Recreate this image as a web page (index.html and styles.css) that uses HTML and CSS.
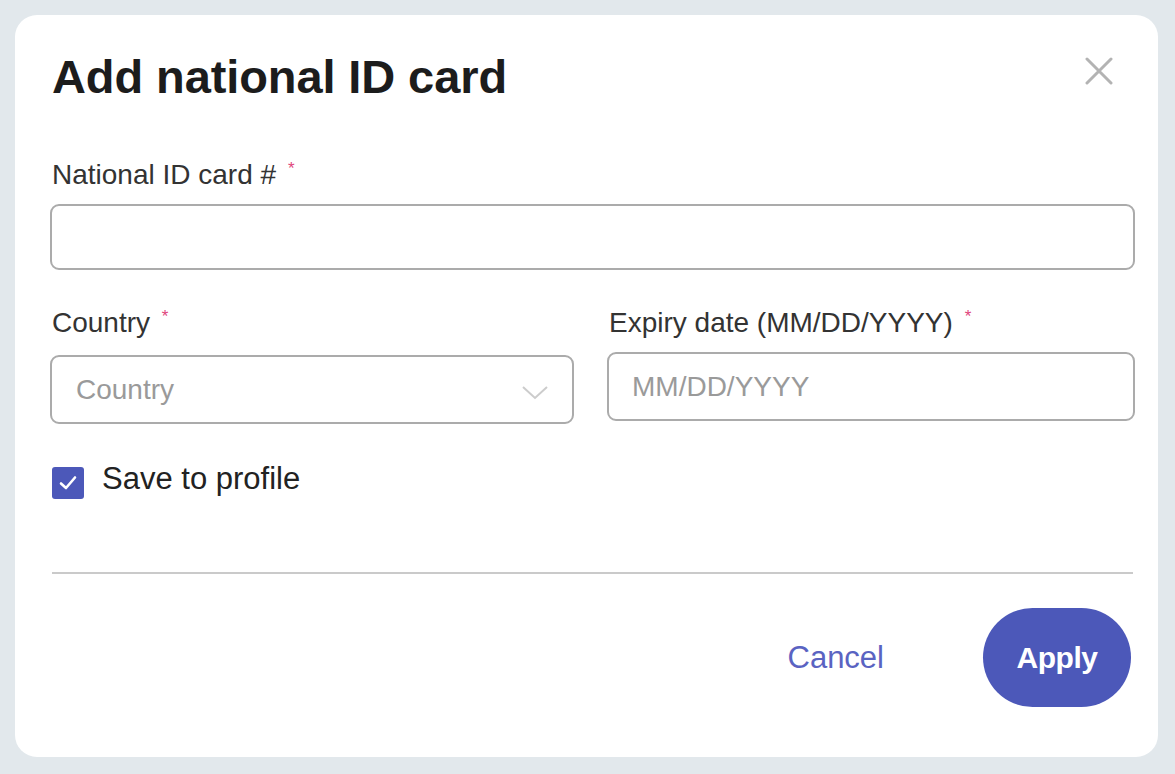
FILE: index.html
```html
<!DOCTYPE html>
<html lang="en">
<head>
    <meta charset="UTF-8">
    <meta name="viewport" content="width=device-width, initial-scale=1.0">
    <title>Add national ID card</title>
    <link rel="stylesheet" href="styles.css">
</head>
<body>
    <div class="dialog">
        <div class="dialog-header">
            <h1>Add national ID card</h1>
            <button class="close-btn" aria-label="Close">
                <svg width="28" height="28" viewBox="0 0 28 28">
                    <path d="M2 2 L26 26 M26 2 L2 26" stroke="#b3b3b3" stroke-width="3" stroke-linecap="round"/>
                </svg>
            </button>
        </div>

        <div class="field">
            <label class="field-label">National ID card # <span class="req">*</span></label>
            <input class="text-input" type="text">
        </div>

        <div class="field-row">
            <div class="field">
                <label class="field-label">Country <span class="req">*</span></label>
                <div class="select">
                    <span class="placeholder">Country</span>
                    <svg width="26" height="14" viewBox="0 0 26 14">
                        <path d="M1 1 L13 12 L25 1" fill="none" stroke="#cccccc" stroke-width="2"/>
                    </svg>
                </div>
            </div>
            <div class="field">
                <label class="field-label">Expiry date (MM/DD/YYYY) <span class="req">*</span></label>
                <input class="text-input short" type="text" placeholder="MM/DD/YYYY">
            </div>
        </div>

        <label class="check-row">
            <span class="checkbox">
                <svg width="20" height="20" viewBox="0 0 20 20">
                    <path d="M3 10.5 L8 15 L17 4.5" fill="none" stroke="#fff" stroke-width="2.6" stroke-linecap="round" stroke-linejoin="round"/>
                </svg>
            </span>
            <span class="check-label">Save to profile</span>
        </label>

        <hr class="divider">

        <div class="dialog-footer">
            <button class="btn-link">Cancel</button>
            <button class="btn-primary">Apply</button>
        </div>
    </div>
</body>
</html>
```

FILE: styles.css
```css
body {
    margin: 0;
    background-color: #e2e8ec;
    font-family: "Liberation Sans", Arial, sans-serif;
    color: #333;
}
.dialog {
    margin: 15px;
    width: 1143px;
    height: 742px;
    box-sizing: border-box;
    padding: 35px 23px 0 35px;
    background-color: #fff;
    border-radius: 22px;
}
.dialog-header {
    display: flex;
    justify-content: space-between;
    align-items: flex-start;
}
.dialog-header h1 {
    margin: 0 0 0 2px;
    font-size: 47px;
    line-height: 53px;
    font-weight: bold;
    color: #1c1c1c;
    letter-spacing: -0.1px;
}
.close-btn {
    margin: 7px 22px 0 0;
    padding: 0;
    border: none;
    background: none;
    width: 28px;
    height: 28px;
    cursor: pointer;
}
.close-btn svg {
    display: block;
}
.field {
    display: flex;
    flex-direction: column;
    margin-top: 56px;
}
.field-label {
    margin-left: 2px;
    font-size: 28px;
    line-height: 32px;
    color: #333;
    margin-bottom: 13px;
}
.req {
    color: #e0457b;
    font-size: 17px;
    line-height: 0;
    vertical-align: 10px;
    margin-left: 4px;
}
.text-input {
    height: 66px;
    box-sizing: border-box;
    border: 2px solid #ababab;
    border-radius: 9px;
    padding: 0 23px;
    font-family: inherit;
    font-size: 28px;
    color: #333;
    outline: none;
}
.text-input::placeholder {
    color: #9a9a9a;
}
.field-row {
    display: grid;
    grid-template-columns: 524px 528px;
    gap: 33px;
    margin-top: 37px;
}
.field-row .field {
    margin-top: 0;
}
.field-row .field-label {
    margin-bottom: 16px;
}
.field-row .text-input {
    height: 68px;
}
.text-input.short {
    margin-top: -3px;
    height: 69px;
}
.select {
    height: 69px;
    box-sizing: border-box;
    border: 2px solid #ababab;
    border-radius: 9px;
    padding: 0 24px 0 24px;
    display: flex;
    justify-content: space-between;
    align-items: center;
}
.placeholder {
    font-size: 28px;
    color: #9a9a9a;
}
.select svg {
    margin-top: 6px;
}
.check-row {
    display: flex;
    align-items: flex-start;
    gap: 18px;
    margin-top: 40px;
    margin-left: 2px;
    cursor: pointer;
}
.checkbox {
    width: 32px;
    height: 32px;
    margin-top: 3px;
    background-color: #4c58b9;
    border-radius: 3px;
    display: flex;
    align-items: center;
    justify-content: center;
}
.check-label {
    font-size: 31px;
    line-height: 30px;
    color: #222;
}
.divider {
    margin: 73px 2px 0 2px;
    border: none;
    height: 2px;
    background-color: #cacaca;
}
.dialog-footer {
    display: flex;
    justify-content: flex-end;
    align-items: center;
    margin-top: 34px;
    margin-right: 4px;
}
.btn-link {
    border: none;
    background: none;
    padding: 0;
    font-family: inherit;
    font-size: 31px;
    color: #5a63c2;
    margin-right: 99px;
    cursor: pointer;
}
.btn-primary {
    width: 148px;
    height: 99px;
    border: none;
    border-radius: 50px;
    background-color: #4c58b9;
    color: #fff;
    font-family: inherit;
    font-size: 30px;
    font-weight: bold;
    letter-spacing: -0.5px;
    cursor: pointer;
}
```
